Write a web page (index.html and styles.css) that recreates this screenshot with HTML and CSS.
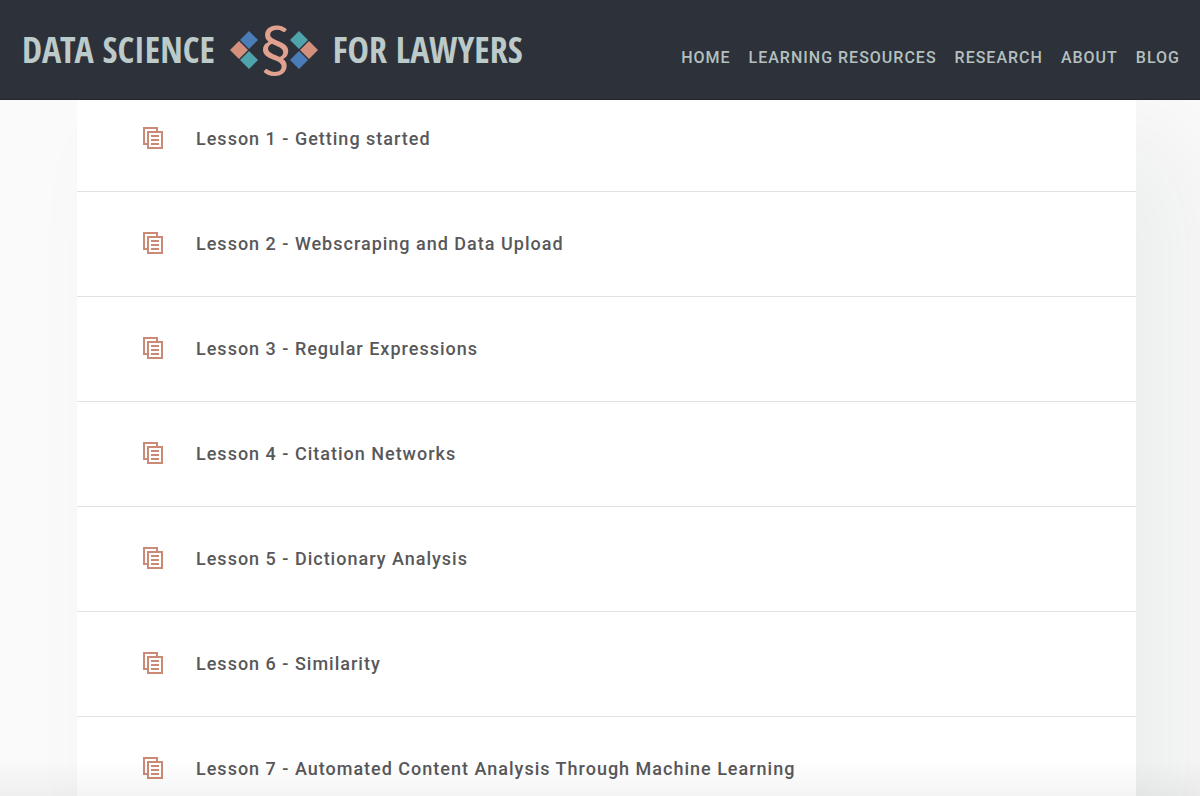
FILE: index.html
```html
<!DOCTYPE html>
<html lang="en">
<head>
<meta charset="utf-8">
<meta name="viewport" content="width=device-width, initial-scale=1">
<title>Data Science for Lawyers</title>
<link rel="stylesheet" href="styles.css">
</head>
<body>
<svg class="sprite" aria-hidden="true">
  <symbol id="pages" viewBox="0 0 20 22">
    <path d="M5 17H1V1h13v4M5 5h14v16H5z" fill="none" stroke="currentColor" stroke-width="2"/>
    <path d="M8 9h8M8 13h8M8 17h8" fill="none" stroke="currentColor" stroke-width="2"/>
  </symbol>
</svg>
<header class="header">
  <a class="logo" href="#">
    <span class="word">DATA SCIENCE</span>
    <span class="emblem">
      <svg class="tiles" viewBox="0 0 28 38" aria-hidden="true">
        <path class="blue" d="M19 0l9 9-9 9-9-9z"/>
        <path class="coral" d="M9 10l9 9-9 9-9-9z"/>
        <path class="teal" d="M19 20l9 9-9 9-9-9z"/>
      </svg>
      <span class="section">§</span>
      <svg class="tiles" viewBox="0 0 28 38" aria-hidden="true">
        <path class="teal" d="M9 0l9 9-9 9-9-9z"/>
        <path class="coral" d="M19 10l9 9-9 9-9-9z"/>
        <path class="blue" d="M9 20l9 9-9 9-9-9z"/>
      </svg>
    </span>
    <span class="word">FOR LAWYERS</span>
  </a>
  <nav class="nav">
    <a href="#">HOME</a>
    <a href="#">LEARNING RESOURCES</a>
    <a href="#">RESEARCH</a>
    <a href="#">ABOUT</a>
    <a href="#">BLOG</a>
  </nav>
</header>
<main class="main">
  <ul class="lessons">
    <li><a class="lesson" href="#"><svg class="icon" aria-hidden="true"><use href="#pages"/></svg>Lesson 1 - Getting started</a></li>
    <li><a class="lesson" href="#"><svg class="icon" aria-hidden="true"><use href="#pages"/></svg>Lesson 2 - Webscraping and Data Upload</a></li>
    <li><a class="lesson" href="#"><svg class="icon" aria-hidden="true"><use href="#pages"/></svg>Lesson 3 - Regular Expressions</a></li>
    <li><a class="lesson" href="#"><svg class="icon" aria-hidden="true"><use href="#pages"/></svg>Lesson 4 - Citation Networks</a></li>
    <li><a class="lesson" href="#"><svg class="icon" aria-hidden="true"><use href="#pages"/></svg>Lesson 5 - Dictionary Analysis</a></li>
    <li><a class="lesson" href="#"><svg class="icon" aria-hidden="true"><use href="#pages"/></svg>Lesson 6 - Similarity</a></li>
    <li><a class="lesson" href="#"><svg class="icon" aria-hidden="true"><use href="#pages"/></svg>Lesson 7 - Automated Content Analysis Through Machine Learning</a></li>
  </ul>
</main>
<div class="fade"></div>
</body>
</html>
```
FILE: styles.css
```css
* { box-sizing: border-box; }
body {
  margin: 0;
  height: 100vh;
  overflow: hidden;
  background: #fafafa;
  font-family: Roboto, "Liberation Sans", sans-serif;
  font-weight: 500;
}
a { color: inherit; text-decoration: none; }
.sprite { display: none; }
.header {
  position: relative;
  z-index: 1;
  display: flex;
  align-items: center;
  justify-content: space-between;
  padding: 0 20px 0 22px;
  height: 100px;
  background: #2d313a;
  border-bottom: 1px solid #23262e;
}
.logo {
  display: flex;
  align-items: center;
  gap: 15px;
  color: #bccac9;
  white-space: nowrap;
}
.word {
  font-family: "Open Sans Condensed", "Roboto Condensed", "Liberation Sans Narrow", "Open Sans", sans-serif;
  font-size: 36px;
  line-height: 48px;
}
.emblem { display: flex; align-items: center; gap: 2px; }
.tiles { width: 28px; height: 38px; }
.blue { fill: #4a7db8; }
.coral { fill: #d4907c; }
.teal { fill: #4fa3ab; }
.section {
  width: 28px;
  font-family: Lato, sans-serif;
  font-size: 64px;
  font-weight: 400;
  line-height: 68px;
  padding-bottom: 4px;
  text-align: center;
  color: #e0a28f;
}
.nav {
  display: flex;
  gap: 18px;
  padding-top: 16px;
  color: #b4c0be;
  font-size: 16px;
  line-height: 20px;
  letter-spacing: 1px;
  white-space: nowrap;
}
.main { padding: 0 64px 0 77px; }
.lessons {
  margin: -13px 0 0;
  padding: 0;
  list-style: none;
  background: #fff;
  box-shadow: 50px 50px 100px rgba(10, 40, 30, 0.06);
}
.lesson {
  display: flex;
  align-items: center;
  gap: 33px;
  height: 105px;
  padding: 0 66px 2px;
  border-bottom: 1px solid #e0e3e6;
  color: #58585a;
  font-size: 18px;
  letter-spacing: 1px;
}
.icon { flex: none; width: 20px; height: 22px; color: #cb8a76; }
.fade {
  position: fixed;
  inset: auto 0 0;
  height: 36px;
  background: linear-gradient(rgba(0, 0, 0, 0), rgba(0, 0, 0, 0.045));
  pointer-events: none;
}
```
